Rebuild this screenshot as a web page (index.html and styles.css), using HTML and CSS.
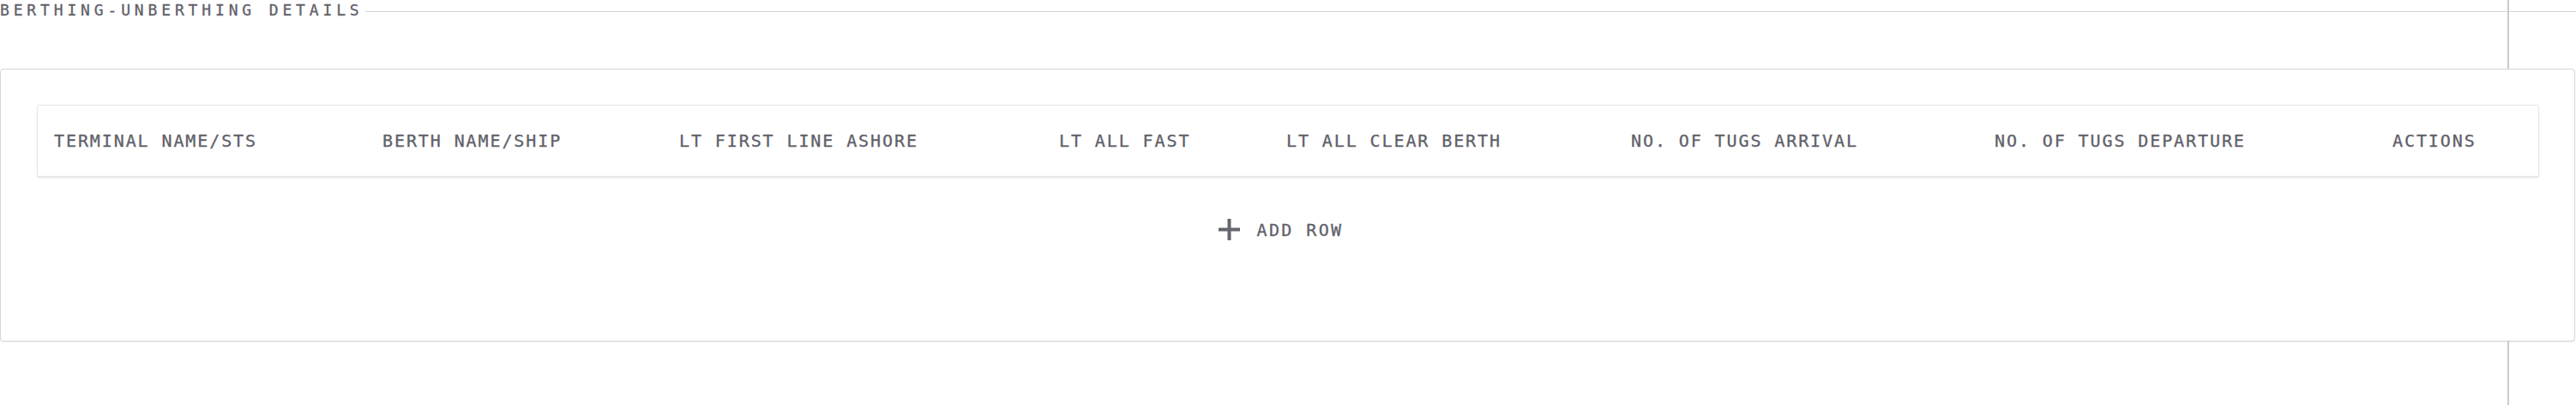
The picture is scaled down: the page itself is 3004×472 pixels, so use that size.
FILE: index.html
```html
<!DOCTYPE html>
<html lang="en">
<head>
<meta charset="utf-8">
<title>Berthing-Unberthing Details</title>
<link rel="stylesheet" href="styles.css">
</head>
<body>
<div class="page">
  <div class="divider-v"></div>
  <div class="section-head">
    <h2 class="section-title">BERTHING-UNBERTHING DETAILS</h2>
    <div class="section-rule"></div>
  </div>
  <div class="card">
    <div class="table-head">
      <div class="th">TERMINAL NAME/STS</div>
      <div class="th">BERTH NAME/SHIP</div>
      <div class="th">LT FIRST LINE ASHORE</div>
      <div class="th">LT ALL FAST</div>
      <div class="th">LT ALL CLEAR BERTH</div>
      <div class="th">NO. OF TUGS ARRIVAL</div>
      <div class="th">NO. OF TUGS DEPARTURE</div>
      <div class="th">ACTIONS</div>
    </div>
    <div class="add-bar">
      <button class="add-btn" type="button">
        <svg class="plus" width="25" height="25" viewBox="0 0 25 25" aria-hidden="true">
          <rect x="0" y="10.5" width="25" height="4" fill="#64666e"/>
          <rect x="10.5" y="0" width="4" height="25" fill="#64666e"/>
        </svg>
        <span class="add-label">ADD ROW</span>
      </button>
    </div>
  </div>
</div>
</body>
</html>
```
FILE: styles.css
```css
html, body {
  margin: 0;
  padding: 0;
  background: #ffffff;
}

.page {
  position: relative;
  width: 3004px;
  height: 472px;
  overflow: hidden;
  font-family: "DejaVu Sans Mono", "Liberation Mono", monospace;
  color: #5f6169;
}

.divider-v {
  position: absolute;
  left: 2924px;
  top: 0;
  width: 2px;
  height: 472px;
  background: #cbcbcf;
  z-index: 0;
}

.section-head {
  display: flex;
  align-items: flex-start;
}

.section-title {
  margin: 0;
  font-size: 18px;
  line-height: 24px;
  font-weight: normal;
  letter-spacing: 4.85px;
  color: #5f6169;
  white-space: nowrap;
  -webkit-text-stroke: 0.3px #5f6169;
}

.section-rule {
  flex: 1;
  height: 1px;
  margin-top: 13px;
  margin-left: 2px;
  background: #d3d3d8;
}

.card {
  position: relative;
  z-index: 1;
  margin: 56px 1px 0 0;
  background: #ffffff;
  border: 1px solid #d6d6db;
  border-radius: 4px;
  box-shadow: 0 1px 1px rgba(0, 0, 0, 0.06);
  padding: 41px 41px 117px 42px;
}

.table-head {
  display: grid;
  grid-template-columns: 383px 346px 443px 265px 402px 424px 464px 1fr;
  align-items: center;
  height: 82px;
  border: 1px solid #e5e5e9;
  border-radius: 2px;
  background: #ffffff;
  box-shadow: 0 2px 2px rgba(0, 0, 0, 0.07);
}

.th {
  padding-left: 19px;
  font-size: 20px;
  line-height: 24px;
  letter-spacing: 1.9px;
  white-space: nowrap;
  color: #5f6169;
  -webkit-text-stroke: 0.3px #5f6169;
}

.add-bar {
  display: flex;
  justify-content: center;
  padding-top: 49px;
}

.add-btn {
  display: flex;
  align-items: center;
  gap: 19px;
  margin: 0;
  padding: 0 16px 0 0;
  border: 0;
  background: transparent;
  font-family: inherit;
  color: #5f6169;
  cursor: pointer;
}

.plus {
  display: block;
  flex: none;
}

.add-label {
  font-size: 20px;
  line-height: 24px;
  letter-spacing: 2.4px;
  -webkit-text-stroke: 0.3px #5f6169;
}
```
